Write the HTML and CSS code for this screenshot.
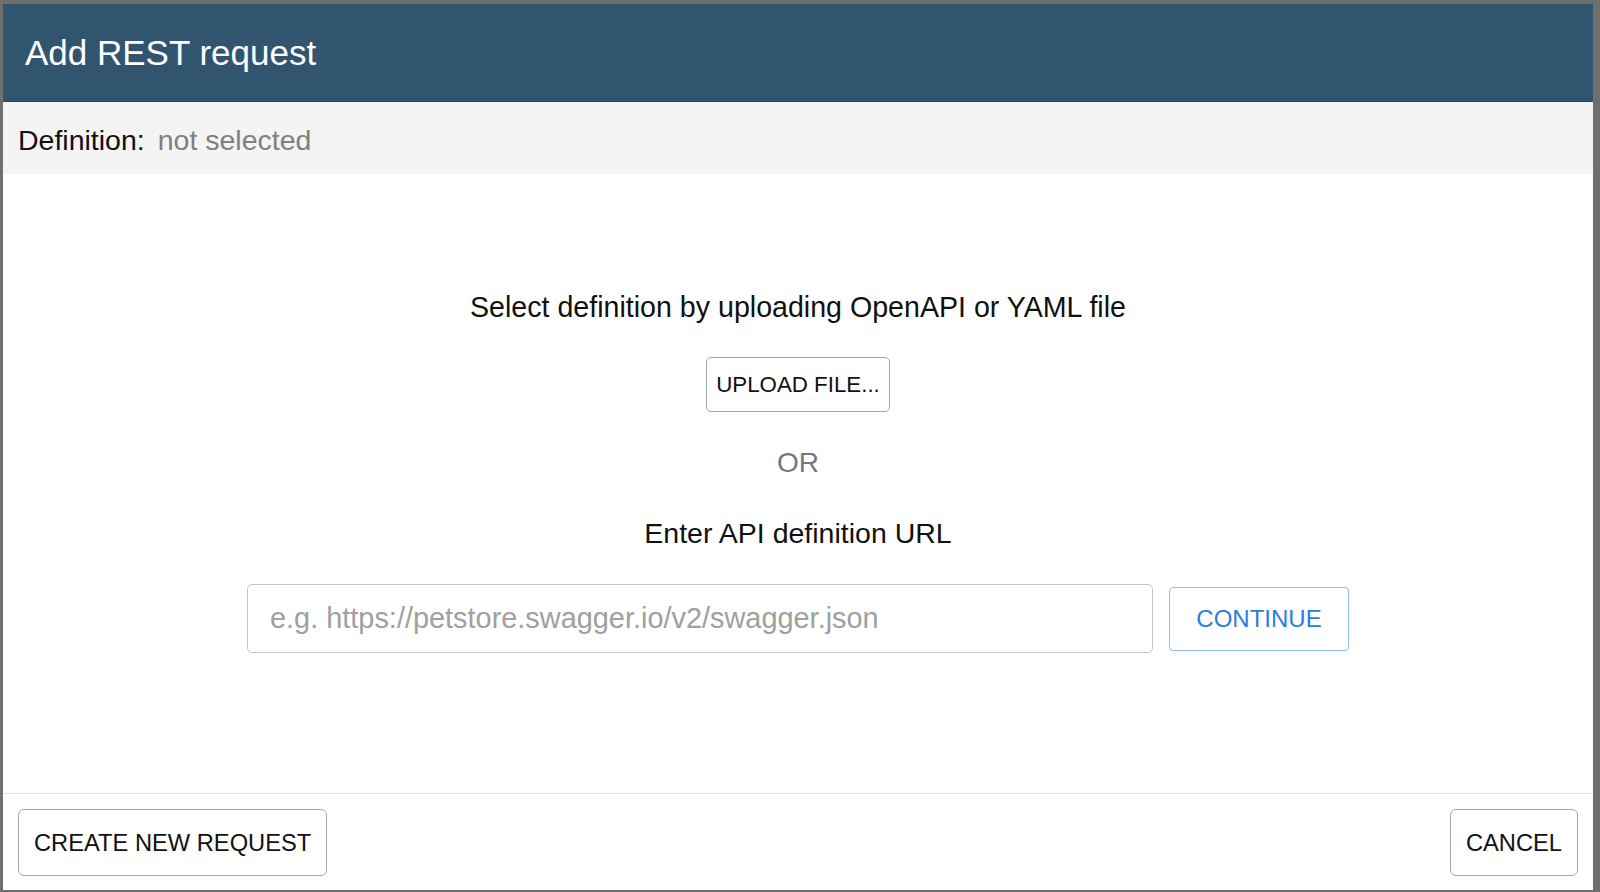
FILE: index.html
```html
<!DOCTYPE html>
<html>
<head>
<meta charset="utf-8">
<title>Add REST request</title>
<link rel="stylesheet" href="styles.css">
</head>
<body>
<div class="backdrop">
  <div class="modal">
    <div class="modal-header">
      <h1 class="modal-title">Add REST request</h1>
    </div>
    <div class="definition-bar">
      <span class="definition-label">Definition:</span>
      <span class="definition-value">not selected</span>
    </div>
    <div class="modal-body">
      <p class="prompt">Select definition by uploading OpenAPI or YAML file</p>
      <button class="btn btn-upload">UPLOAD FILE...</button>
      <p class="or">OR</p>
      <p class="prompt prompt-url">Enter API definition URL</p>
      <div class="url-row">
        <input class="url-input" type="text" placeholder="e.g. https://petstore.swagger.io/v2/swagger.json">
        <button class="btn btn-continue">CONTINUE</button>
      </div>
    </div>
    <div class="modal-footer">
      <button class="btn btn-footer">CREATE NEW REQUEST</button>
      <button class="btn btn-footer">CANCEL</button>
    </div>
  </div>
</div>
</body>
</html>
```

FILE: styles.css
```css
* { box-sizing: border-box; }

html, body {
  margin: 0;
  padding: 0;
  height: 100%;
}

body {
  background: #6f6f6f;
  font-family: "Liberation Sans", Arial, Helvetica, sans-serif;
  color: #111;
  overflow: hidden;
}

.backdrop {
  padding: 4px 7px 2px 3px;
  height: 892px;
}

.modal {
  background: #fff;
  height: 886px;
  display: flex;
  flex-direction: column;
}

.modal-header {
  background: #31546f;
  height: 98px;
  padding: 29px 20px 0 22px;
  border-bottom: 1px solid #22475f;
}

.modal-title {
  margin: 0;
  font-size: 35px;
  line-height: 40px;
  font-weight: normal;
  color: #fff;
}

.definition-bar {
  background: #f4f4f4;
  height: 72px;
  padding: 22px 15px 0 15px;
  font-size: 28.5px;
  line-height: 32px;
  display: flex;
  gap: 13px;
}

.definition-label { color: #111; }
.definition-value { color: #808080; }

.modal-body {
  flex: 1;
  display: flex;
  flex-direction: column;
  align-items: center;
  padding-top: 117px;
}

.prompt {
  margin: 0;
  font-size: 28.6px;
  line-height: 32px;
  color: #111;
}

.btn {
  font-family: "Liberation Sans", Arial, Helvetica, sans-serif;
  background: #fff;
  color: #111;
  cursor: pointer;
}

.btn-upload {
  margin-top: 34px;
  font-size: 22.3px;
  line-height: 27px;
  padding: 13px 9px;
  border: 1px solid #a6a6a6;
  border-radius: 5px;
}

.or {
  margin: 35px 0 0 0;
  font-size: 28px;
  line-height: 32px;
  color: #777;
}

.prompt-url {
  margin-top: 38px;
  font-size: 28.5px;
}

.url-row {
  margin-top: 35px;
  display: flex;
  align-items: center;
  gap: 16px;
}

.url-input {
  width: 906px;
  height: 69px;
  border: 1px solid #c4c4c4;
  border-radius: 5px;
  padding: 0 22px;
  font-family: "Liberation Sans", Arial, Helvetica, sans-serif;
  font-size: 28.9px;
  color: #111;
  outline: none;
}

.url-input::placeholder {
  color: #a0a0a0;
}

.btn-continue {
  width: 180px;
  height: 64px;
  border: 1px solid #8fbcf2;
  border-radius: 4px;
  color: #2b7de3;
  font-size: 24px;
  line-height: 29px;
  padding: 0;
}

.modal-footer {
  border-top: 1px solid #e0e0e0;
  height: 97px;
  padding: 15px 15px 0 15px;
  display: flex;
  justify-content: space-between;
  align-items: flex-start;
}

.btn-footer {
  font-size: 23.7px;
  line-height: 29px;
  padding: 19px 15px 17px 15px;
  border: 1px solid #a8a8a8;
  border-radius: 6px;
}
```
